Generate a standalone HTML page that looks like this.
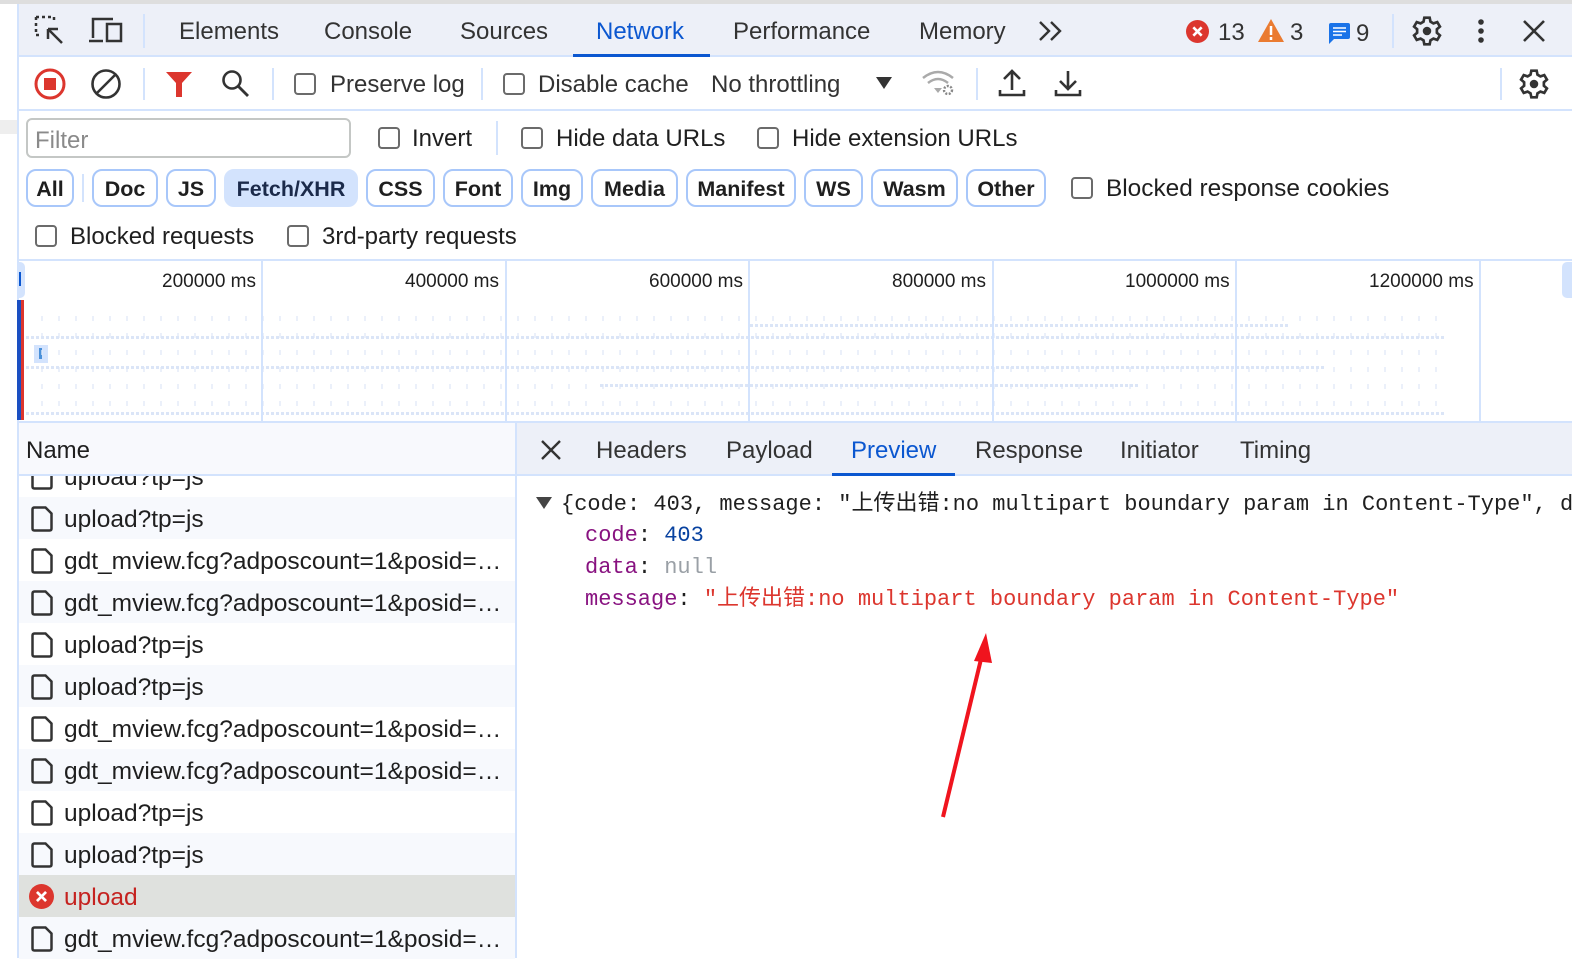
<!DOCTYPE html>
<html><head><meta charset="utf-8"><style>
*{margin:0;padding:0;box-sizing:border-box}
body{width:1572px;height:958px;overflow:hidden;background:#fff;font-family:"Liberation Sans","Noto Sans CJK SC",sans-serif;color:#1f1f1f;position:relative;font-size:24px}
.a{position:absolute;white-space:nowrap}
.cb{position:absolute;width:22px;height:22px;border:2px solid #6b6b6b;border-radius:4px;background:#fff}
.btn{position:absolute;top:169px;height:38px;border:2px solid #a8c7fa;border-radius:10px;font-weight:bold;font-size:21.5px;line-height:36px;text-align:center;color:#1f1f1f}
.sep{position:absolute;width:2px;background:#d3e3fd}
.row{position:absolute;left:19px;width:496px;height:42px;font-size:24.5px;line-height:46px;padding-left:45px;overflow:hidden}
.doc{position:absolute;left:11px;top:9px}
.mono{font-family:"Liberation Mono","Noto Sans CJK SC",monospace;font-size:22px;line-height:26px;height:26px}
</style></head><body>
<div class="a" style="left:0;top:0;width:1572px;height:4px;background:#dedede"></div>
<div class="a" style="left:0;top:4px;width:17px;height:954px;background:#fff"></div>
<div class="a" style="left:0;top:120px;width:17px;height:14px;background:#eee"></div>
<div class="a" style="left:17px;top:4px;width:2px;height:954px;background:#d3e3fd"></div>
<!-- tab bar -->
<div class="a" style="left:19px;top:4px;width:1553px;height:53px;background:#edf0f8;border-bottom:2px solid #d3e3fd"></div>
<svg class="a" style="left:34px;top:15px" width="32" height="32" viewBox="0 0 32 32"><path d="M2 2h18v4M2 2v18h4" fill="none" stroke="#333" stroke-width="2.5" stroke-dasharray="3 3"/><path d="M14 14l14 14M14 14v10M14 14h10" stroke="#333" stroke-width="2.5" fill="none"/></svg>
<svg class="a" style="left:88px;top:16px" width="36" height="30" viewBox="0 0 36 30"><path d="M5 22V3h20M1 25h14" stroke="#333" stroke-width="2.5" fill="none"/><rect x="19" y="8" width="14" height="17" fill="none" stroke="#333" stroke-width="2.5"/></svg>
<div class="sep" style="left:143px;top:14px;height:34px"></div>
<div class="a" style="left:179px;top:18px;color:#333">Elements</div>
<div class="a" style="left:324px;top:18px;color:#333">Console</div>
<div class="a" style="left:460px;top:18px;color:#333">Sources</div>
<div class="a" style="left:596px;top:18px;color:#0b57d0">Network</div>
<div class="a" style="left:573px;top:54px;width:137px;height:3px;background:#0b57d0"></div>
<div class="a" style="left:733px;top:18px;color:#333">Performance</div>
<div class="a" style="left:919px;top:18px;color:#333">Memory</div>
<svg class="a" style="left:1038px;top:20px" width="26" height="22"><path d="M2 2l9 9-9 9M13 2l9 9-9 9" fill="none" stroke="#333" stroke-width="2.4"/></svg>
<svg class="a" style="left:1186px;top:20px" width="23" height="23" viewBox="0 0 22 22"><circle cx="11" cy="11" r="11" fill="#dc362e"/><path d="M7 7l8 8M15 7l-8 8" stroke="#fff" stroke-width="2.5"/></svg>
<div class="a" style="left:1218px;top:19px;color:#333">13</div>
<svg class="a" style="left:1258px;top:19px" width="26" height="23" viewBox="0 0 26 23"><path d="M13 0L26 23H0z" fill="#ea7b31"/><path d="M13 7v9M13 18v3" stroke="#fff" stroke-width="2.5"/></svg>
<div class="a" style="left:1290px;top:19px;color:#333">3</div>
<svg class="a" style="left:1329px;top:23px" width="21" height="21" viewBox="0 0 21 21"><path d="M0 2q0-2 2-2h17q2 0 2 2v12q0 2-2 2H5l-5 5z" fill="#1a73e8"/><path d="M4 5h13M4 8.5h13M4 12h9" stroke="#fff" stroke-width="1.6"/></svg>
<div class="a" style="left:1356px;top:20px;color:#333">9</div>
<div class="sep" style="left:1392px;top:14px;height:34px"></div>
<svg class="a" style="left:1411px;top:15px" width="32" height="32" viewBox="0 0 24 24"><path fill="none" stroke="#333" stroke-width="2" d="M10 2h4l.6 3 2.2 1.3 2.9-1 2 3.4-2.3 2v2.6l2.3 2-2 3.4-2.9-1-2.2 1.3-.6 3h-4l-.6-3-2.2-1.3-2.9 1-2-3.4 2.3-2v-2.6l-2.3-2 2-3.4 2.9 1L9.4 5z"/><circle cx="12" cy="12" r="3.2" fill="#333"/></svg>
<svg class="a" style="left:1474px;top:17px" width="14" height="28"><circle cx="7" cy="5" r="2.8" fill="#333"/><circle cx="7" cy="14" r="2.8" fill="#333"/><circle cx="7" cy="23" r="2.8" fill="#333"/></svg>
<svg class="a" style="left:1522px;top:19px" width="24" height="24"><path d="M2 2l20 20M22 2L2 22" stroke="#333" stroke-width="2.6"/></svg>
<!-- toolbar -->
<div class="a" style="left:19px;top:109px;width:1553px;height:2px;background:#d3e3fd"></div>
<svg class="a" style="left:33px;top:67px" width="34" height="34"><circle cx="17" cy="17" r="14" fill="none" stroke="#dc362e" stroke-width="3"/><rect x="11" y="11" width="12" height="12" fill="#dc362e"/></svg>
<svg class="a" style="left:89px;top:67px" width="34" height="34"><circle cx="17" cy="17" r="13.5" fill="none" stroke="#333" stroke-width="2.6"/><path d="M8 26L26 8" stroke="#333" stroke-width="2.6"/></svg>
<div class="sep" style="left:143px;top:68px;height:32px"></div>
<svg class="a" style="left:165px;top:70px" width="28" height="28"><path d="M1 2h26L17 13v14h-6V13z" fill="#dc362e"/></svg>
<svg class="a" style="left:220px;top:68px" width="30" height="30"><circle cx="12" cy="12" r="8.5" fill="none" stroke="#333" stroke-width="2.6"/><path d="M18 18l10 10" stroke="#333" stroke-width="2.8"/></svg>
<div class="sep" style="left:272px;top:68px;height:32px"></div>
<div class="cb" style="left:294px;top:73px"></div>
<div class="a" style="left:330px;top:71px;color:#333">Preserve log</div>
<div class="sep" style="left:481px;top:68px;height:32px"></div>
<div class="cb" style="left:503px;top:73px"></div>
<div class="a" style="left:538px;top:71px;color:#333">Disable cache</div>
<div class="a" style="left:711px;top:71px;color:#333">No throttling</div>
<svg class="a" style="left:876px;top:77px" width="16" height="12"><path d="M0 0h16L8 12z" fill="#333"/></svg>
<svg class="a" style="left:921px;top:68px" width="36" height="30" viewBox="0 0 36 30"><path d="M2 10q15-12 30 0M7 15q10-8 20 0" fill="none" stroke="#aaa" stroke-width="2.5"/><path d="M13 20l4 5 4-5" fill="#aaa"/><circle cx="27" cy="22" r="4" fill="none" stroke="#888" stroke-width="2.4" stroke-dasharray="2 1.5"/></svg>
<div class="sep" style="left:976px;top:68px;height:32px"></div>
<svg class="a" style="left:998px;top:68px" width="28" height="30"><path d="M14 22V4M6 11l8-8 8 8M2 22v5h24v-5" fill="none" stroke="#333" stroke-width="2.6"/></svg>
<svg class="a" style="left:1054px;top:68px" width="28" height="30"><path d="M14 3v18M6 13l8 8 8-8M2 22v5h24v-5" fill="none" stroke="#333" stroke-width="2.6"/></svg>
<div class="sep" style="left:1500px;top:68px;height:32px"></div>
<svg class="a" style="left:1518px;top:68px" width="32" height="32" viewBox="0 0 24 24"><path fill="none" stroke="#333" stroke-width="2" d="M10 2h4l.6 3 2.2 1.3 2.9-1 2 3.4-2.3 2v2.6l2.3 2-2 3.4-2.9-1-2.2 1.3-.6 3h-4l-.6-3-2.2-1.3-2.9 1-2-3.4 2.3-2v-2.6l-2.3-2 2-3.4 2.9 1L9.4 5z"/><circle cx="12" cy="12" r="3.2" fill="#333"/></svg>
<!-- filter row -->
<div class="a" style="left:26px;top:118px;width:325px;height:40px;border:2px solid #c4c7c5;border-radius:6px"></div>
<div class="a" style="left:35px;top:127px;color:#8a8a8a">Filter</div>
<div class="cb" style="left:378px;top:127px"></div>
<div class="a" style="left:412px;top:125px">Invert</div>
<div class="sep" style="left:496px;top:121px;height:34px"></div>
<div class="cb" style="left:521px;top:127px"></div>
<div class="a" style="left:556px;top:125px">Hide data URLs</div>
<div class="cb" style="left:757px;top:127px"></div>
<div class="a" style="left:792px;top:125px">Hide extension URLs</div>
<!-- type buttons -->
<div class="btn" style="left:26px;width:48px">All</div>
<div class="sep" style="left:82px;top:174px;height:28px"></div>
<div class="btn" style="left:92px;width:66px">Doc</div>
<div class="btn" style="left:166px;width:50px">JS</div>
<div class="btn" style="left:224px;width:134px;background:#d3e3fd;border-color:#d3e3fd;color:#1b2a4a">Fetch/XHR</div>
<div class="btn" style="left:366px;width:69px">CSS</div>
<div class="btn" style="left:443px;width:70px">Font</div>
<div class="btn" style="left:521px;width:62px">Img</div>
<div class="btn" style="left:591px;width:87px">Media</div>
<div class="btn" style="left:686px;width:110px">Manifest</div>
<div class="btn" style="left:804px;width:59px">WS</div>
<div class="btn" style="left:871px;width:87px">Wasm</div>
<div class="btn" style="left:966px;width:80px">Other</div>
<div class="cb" style="left:1071px;top:177px"></div>
<div class="a" style="left:1106px;top:175px;font-size:24.4px">Blocked response cookies</div>
<div class="cb" style="left:35px;top:225px"></div>
<div class="a" style="left:70px;top:223px">Blocked requests</div>
<div class="cb" style="left:287px;top:225px"></div>
<div class="a" style="left:322px;top:223px">3rd-party requests</div>
<!-- timeline -->
<div class="a" style="left:19px;top:259px;width:1553px;height:2px;background:#d3e3fd"></div>
<div class="a" style="left:19px;top:421px;width:1553px;height:2px;background:#d3e3fd"></div>
<div class="a" style="left:17px;top:262px;width:8px;height:36px;background:#d3e3fd;border-radius:0 5px 5px 0"></div>
<div class="a" style="left:19px;top:272px;width:2px;height:14px;background:#0b57d0"></div>
<div class="a" style="left:1562px;top:262px;width:10px;height:36px;background:#d3e3fd;border-radius:5px 0 0 5px"></div>
<div class="a" style="left:17px;top:300px;width:5px;height:120px;background:#1a4fc2"></div>
<div class="a" style="left:21px;top:300px;width:3px;height:120px;background:#dc362e"></div>
<div class="a" style="left:34px;top:345px;width:14px;height:18px;background:#d3e3fd"></div>
<div class="a" style="left:39px;top:348px;width:3px;height:11px;background:#4a90d9"></div>
<div class="a" style="left:26px;top:310px;width:1420px;height:108px;opacity:.7;background:
repeating-linear-gradient(90deg,transparent 0 15px,#e3ebf9 15px 17px);-webkit-mask:repeating-linear-gradient(0deg,transparent 0 12px,#000 12px 17px)"></div>
<div class="a" style="left:26px;top:336px;width:1420px;height:3px;background:repeating-linear-gradient(90deg,#dbe5f7 0 3px,transparent 3px 5px)"></div>
<div class="a" style="left:26px;top:366px;width:1300px;height:3px;background:repeating-linear-gradient(90deg,#dbe5f7 0 3px,transparent 3px 5px)"></div>
<div class="a" style="left:600px;top:384px;width:540px;height:3px;background:repeating-linear-gradient(90deg,#dbe5f7 0 3px,transparent 3px 5px)"></div>
<div class="a" style="left:26px;top:412px;width:1420px;height:3px;background:repeating-linear-gradient(90deg,#dbe5f7 0 3px,transparent 3px 5px)"></div>
<div class="a" style="left:750px;top:324px;width:540px;height:3px;background:repeating-linear-gradient(90deg,#dbe5f7 0 3px,transparent 3px 5px)"></div>
<div class="sep" style="left:261px;top:261px;height:160px"></div>
<div class="sep" style="left:505px;top:261px;height:160px"></div>
<div class="sep" style="left:748px;top:261px;height:160px"></div>
<div class="sep" style="left:992px;top:261px;height:160px"></div>
<div class="sep" style="left:1235px;top:261px;height:160px"></div>
<div class="sep" style="left:1479px;top:261px;height:160px"></div>
<div class="a" style="left:162px;top:271px;font-size:19px">200000 ms</div>
<div class="a" style="left:405px;top:271px;font-size:19px">400000 ms</div>
<div class="a" style="left:649px;top:271px;font-size:19px">600000 ms</div>
<div class="a" style="left:892px;top:271px;font-size:19px">800000 ms</div>
<div class="a" style="left:1125px;top:271px;font-size:19px">1000000 ms</div>
<div class="a" style="left:1369px;top:271px;font-size:19px">1200000 ms</div>
<!-- list -->
<div class="a" style="left:515px;top:423px;width:2px;height:535px;background:#d3e3fd"></div>
<svg width="0" height="0" style="position:absolute"><defs><symbol id="d" viewBox="0 0 24 26"><path d="M2.5 3.5q0-2 2-2h11l6 6v15q0 2-2 2h-15q-2 0-2-2z" fill="none" stroke="#333" stroke-width="2.5"/></symbol></defs></svg>
<div class="row" style="top:455px"><svg class="doc" width="24" height="26"><use href="#d"/></svg>upload?tp=js</div>
<div class="a" style="left:19px;top:423px;width:496px;height:53px;background:#f8f9fd;border-bottom:2px solid #d3e3fd"></div>
<div class="a" style="left:26px;top:437px">Name</div>
<div class="row" style="top:497px;background:#f7f9fd"><svg class="doc" width="24" height="26"><use href="#d"/></svg>upload?tp=js</div>
<div class="row" style="top:539px"><svg class="doc" width="24" height="26"><use href="#d"/></svg>gdt_mview.fcg?adposcount=1&amp;posid=…</div>
<div class="row" style="top:581px;background:#f7f9fd"><svg class="doc" width="24" height="26"><use href="#d"/></svg>gdt_mview.fcg?adposcount=1&amp;posid=…</div>
<div class="row" style="top:623px"><svg class="doc" width="24" height="26"><use href="#d"/></svg>upload?tp=js</div>
<div class="row" style="top:665px;background:#f7f9fd"><svg class="doc" width="24" height="26"><use href="#d"/></svg>upload?tp=js</div>
<div class="row" style="top:707px"><svg class="doc" width="24" height="26"><use href="#d"/></svg>gdt_mview.fcg?adposcount=1&amp;posid=…</div>
<div class="row" style="top:749px;background:#f7f9fd"><svg class="doc" width="24" height="26"><use href="#d"/></svg>gdt_mview.fcg?adposcount=1&amp;posid=…</div>
<div class="row" style="top:791px"><svg class="doc" width="24" height="26"><use href="#d"/></svg>upload?tp=js</div>
<div class="row" style="top:833px;background:#f7f9fd"><svg class="doc" width="24" height="26"><use href="#d"/></svg>upload?tp=js</div>
<div class="row" style="top:875px;background:#dfe1de;color:#c5221f"><svg class="a" style="left:10px;top:9px" width="25" height="25" viewBox="0 0 22 22"><circle cx="11" cy="11" r="11" fill="#dc362e"/><path d="M7 7l8 8M15 7l-8 8" stroke="#fff" stroke-width="2.4"/></svg>upload</div>
<div class="row" style="top:917px;background:#f7f9fd"><svg class="doc" width="24" height="26"><use href="#d"/></svg>gdt_mview.fcg?adposcount=1&amp;posid=…</div>
<!-- right panel -->
<div class="a" style="left:517px;top:423px;width:1055px;height:53px;background:#edf0f8;border-bottom:2px solid #d3e3fd"></div>
<svg class="a" style="left:541px;top:440px" width="20" height="20"><path d="M1 1l18 18M19 1L1 19" stroke="#333" stroke-width="2.4"/></svg>
<div class="a" style="left:596px;top:437px;color:#333">Headers</div>
<div class="a" style="left:726px;top:437px;color:#333">Payload</div>
<div class="a" style="left:851px;top:437px;color:#0b57d0">Preview</div>
<div class="a" style="left:832px;top:473px;width:123px;height:3px;background:#0b57d0"></div>
<div class="a" style="left:975px;top:437px;color:#333">Response</div>
<div class="a" style="left:1120px;top:437px;color:#333">Initiator</div>
<div class="a" style="left:1240px;top:437px;color:#333">Timing</div>
<svg class="a" style="left:536px;top:497px" width="16" height="12"><path d="M0 0h16L8 12z" fill="#444"/></svg>
<div class="a mono" style="left:561px;top:492px;color:#1f1f1f">{code: 403, message: "上传出错:no multipart boundary param in Content-Type", d</div>
<div class="a mono" style="left:585px;top:523px"><span style="color:#881280">code</span>: <span style="color:#0842a0">403</span></div>
<div class="a mono" style="left:585px;top:555px"><span style="color:#881280">data</span>: <span style="color:#9aa0a6">null</span></div>
<div class="a mono" style="left:585px;top:587px"><span style="color:#881280">message</span>: <span style="color:#dc362e">"上传出错:no multipart boundary param in Content-Type"</span></div>
<svg class="a" style="left:930px;top:625px" width="70" height="200"><path d="M13 192L52 30" stroke="#f0141e" stroke-width="4"/><path d="M56 8L44 36L62 38z" fill="#f0141e"/></svg>
</body></html>
